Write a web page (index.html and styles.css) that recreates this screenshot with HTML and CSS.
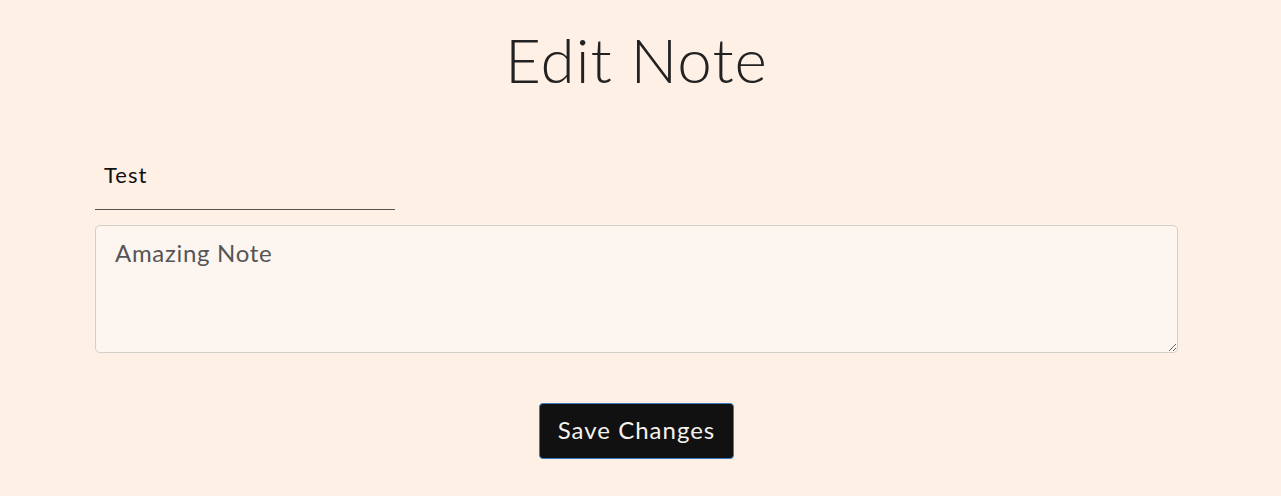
FILE: index.html
```html
<!DOCTYPE html>
<html>
<head>
<meta charset="utf-8">
<link rel="stylesheet" href="styles.css">
</head>
<body>
<main class="page">
  <h1 class="title">Edit Note</h1>
  <form class="note-form">
    <input class="note-title" type="text" value="Test">
    <textarea class="note-body">Amazing Note</textarea>
    <div class="actions">
      <button class="save-btn" type="button">Save Changes</button>
    </div>
  </form>
</main>
</body>
</html>
```
FILE: styles.css
```css
html, body {
  margin: 0;
  padding: 0;
  background: #fff0e5;
}
body {
  font-family: "Lato", "Open Sans", sans-serif;
  color: #212529;
}
.page {
  width: 1273px;
  display: flex;
  flex-direction: column;
  align-items: center;
}
.title {
  margin: 21px 0 0;
  height: 76px;
  font-size: 62px;
  font-weight: 300;
  line-height: 76px;
  letter-spacing: 1px;
  color: #222;
}
.note-form {
  align-self: flex-start;
  margin: 58px 0 0 95px;
  width: 1083px;
  display: flex;
  flex-direction: column;
}
.note-title {
  width: 300px;
  height: 55px;
  box-sizing: border-box;
  border: none;
  border-bottom: 1px solid #555;
  background: transparent;
  padding: 0 9px 16px;
  font-family: inherit;
  font-size: 22px;
  letter-spacing: 1px;
  color: #111;
  outline: none;
}
.note-body {
  margin-top: 15px;
  height: 128px;
  box-sizing: border-box;
  border: 1px solid #d3cfcb;
  border-radius: 5px;
  background: #fdf6f0;
  padding: 12px 19px;
  font-family: inherit;
  font-size: 24px;
  letter-spacing: 0.7px;
  color: #555;
  outline: none;
}
.actions {
  display: flex;
  justify-content: center;
  margin-top: 50px;
}
.save-btn {
  width: 195px;
  height: 56px;
  padding: 0 0 3px;
  background: #111;
  color: #f5f1ec;
  border: 1px solid #3a78c0;
  border-radius: 4px;
  font-family: inherit;
  font-size: 24px;
  letter-spacing: 1px;
}
```
